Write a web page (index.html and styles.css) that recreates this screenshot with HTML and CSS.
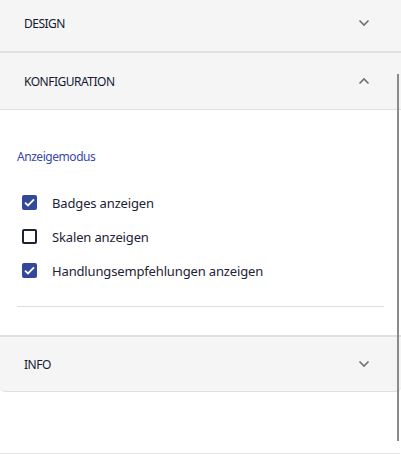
FILE: index.html
```html
<!DOCTYPE html>
<html lang="de">
<head>
<meta charset="utf-8">
<link rel="stylesheet" href="styles.css">
</head>
<body>
<div class="page">
  <div class="accordion">
    <div class="panel-header design">
      <span class="title">DESIGN</span>
      <svg class="chev" width="12" height="8" viewBox="0 0 12 8"><path d="M1.5 1.5 L6 6 L10.5 1.5" fill="none" stroke="#707070" stroke-width="1.6"/></svg>
    </div>
    <div class="panel-header konfig">
      <span class="title">KONFIGURATION</span>
      <svg class="chev" width="12" height="8" viewBox="0 0 12 8"><path d="M1.5 6.5 L6 2 L10.5 6.5" fill="none" stroke="#707070" stroke-width="1.6"/></svg>
    </div>
    <div class="panel-body">
      <div class="section-label">Anzeigemodus</div>
      <ul class="options">
        <li class="option">
          <span class="box checked"><svg width="11" height="9" viewBox="0 0 11 9"><path d="M1 4.6 L4 7.4 L10 1.4" fill="none" stroke="#fff" stroke-width="1.8"/></svg></span>
          <span class="label">Badges anzeigen</span>
        </li>
        <li class="option">
          <span class="box"></span>
          <span class="label">Skalen anzeigen</span>
        </li>
        <li class="option">
          <span class="box checked"><svg width="11" height="9" viewBox="0 0 11 9"><path d="M1 4.6 L4 7.4 L10 1.4" fill="none" stroke="#fff" stroke-width="1.8"/></svg></span>
          <span class="label">Handlungsempfehlungen anzeigen</span>
        </li>
      </ul>
      <div class="divider"></div>
    </div>
    <div class="panel-header info">
      <span class="title">INFO</span>
      <svg class="chev" width="12" height="8" viewBox="0 0 12 8"><path d="M1.5 1.5 L6 6 L10.5 1.5" fill="none" stroke="#707070" stroke-width="1.6"/></svg>
    </div>
  </div>
  <div class="footer-line"></div>
  <div class="scrollbar"></div>
</div>
</body>
</html>
```

FILE: styles.css
```css
* { box-sizing: border-box; }
html, body { margin: 0; padding: 0; background: #fff; }
body {
  font-family: "Noto Sans", "Open Sans", "Liberation Sans", sans-serif;
  color: #1a1a2e;
}
.page {
  position: relative;
  width: 401px;
  height: 456px;
  overflow: hidden;
}
.accordion {
  display: flex;
  flex-direction: column;
}
.panel-header {
  display: flex;
  align-items: center;
  justify-content: space-between;
  padding: 0 31px 0 24px;
  background: #f5f5f5;
}
.title {
  font-size: 12px;
  letter-spacing: -0.5px;
  color: #141a33;
}
.chev { display: block; }
.design {
  height: 53px;
  padding-bottom: 5px;
  border-bottom: 2px solid #e0e0e0;
}
.konfig {
  height: 57px;
  border-bottom: 1px solid #e0e0e0;
}
.panel-body {
  height: 227px;
  padding: 39px 17px 0 17px;
  border-bottom: 2px solid #e0e0e0;
}
.section-label {
  font-size: 12px;
  color: #3949ab;
  line-height: 16px;
  letter-spacing: -0.45px;
}
.options {
  list-style: none;
  margin: 29px 0 0 0;
  padding: 0 0 0 5px;
  display: flex;
  flex-direction: column;
  gap: 17px;
}
.option {
  display: flex;
  align-items: center;
  height: 17px;
}
.box {
  width: 15px;
  height: 15px;
  border: 2px solid #1e2235;
  border-radius: 2px;
  display: flex;
  align-items: center;
  justify-content: center;
  margin-right: 15px;
  flex: none;
}
.box.checked {
  background: #33479b;
  border-color: #33479b;
}
.label {
  font-size: 13px;
  color: #1e2235;
  letter-spacing: -0.15px;
}
.divider {
  margin-top: 27px;
  height: 1px;
  background: #dedede;
  width: 367px;
}
.info {
  height: 55px;
  border-bottom: 1px solid #e0e0e0;
  border-radius: 0 0 5px 5px;
}
.footer-line {
  margin-top: 61px;
  height: 1px;
  width: 400px;
  background: #e6e6e6;
}
.scrollbar {
  position: absolute;
  left: 397px;
  top: 74px;
  width: 2px;
  height: 367px;
  background: #8a8a8a;
}
```
